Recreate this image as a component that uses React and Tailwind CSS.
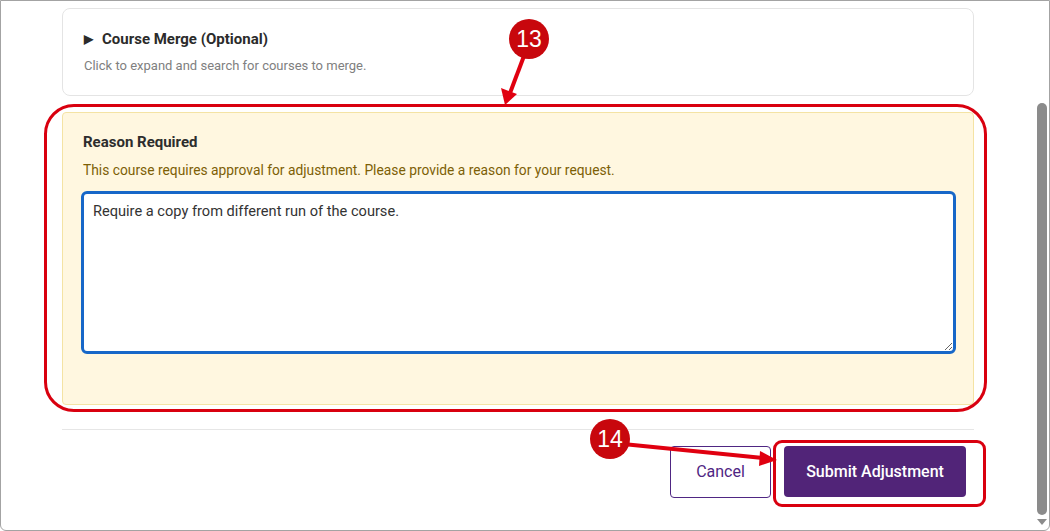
import React from 'react';

const Badge = ({ n, className }) => (
    <div
        className={`absolute w-[40px] h-[40px] rounded-full bg-[#c8070d] text-white flex items-center justify-center text-[23px] font-['Liberation_Sans',Arial,sans-serif] ${className}`}
    >
        {n}
    </div>
);

const App = () => {
    return (
        <div className="relative w-[1050px] h-[531px] overflow-hidden bg-white border border-[#a3a3a3] rounded-b-[6px] font-['Roboto',sans-serif] flex">
            <div className="flex-1 pl-[61px] pr-[61px] pt-[7px]">
                {/* collapsed merge section */}
                <div className="border border-[#e4e4e4] rounded-lg pl-[21px] pt-[20px] pb-[21px] h-[88px]">
                    <div className="flex items-center gap-[9px] text-[15px] leading-[20px] font-bold text-[#2b2b2b]">
                        <span className="text-[12px]">▶</span>
                        <span>Course Merge (Optional)</span>
                    </div>
                    <p className="mt-[8px] text-[13px] leading-[17px] text-[#808080]">
                        Click to expand and search for courses to merge.
                    </p>
                </div>

                {/* reason panel */}
                <div className="mt-[16px] h-[293px] bg-[#fff7e0] border border-[#f4e3a4] rounded-[4px] pl-[18px] pr-[17px] pt-[19px]">
                    <h3 className="pl-[2px] text-[15px] leading-[20px] font-bold text-[#2d2d2d]">Reason Required</h3>
                    <p className="pl-[2px] mt-[8px] text-[13.8px] leading-[20px] text-[#7d5f06]">
                        This course requires approval for adjustment. Please provide a reason for your request.
                    </p>
                    <textarea
                        defaultValue="Require a copy from different run of the course."
                        className="mt-[11px] block w-full h-[163px] bg-white border-[3px] border-[#1767c8] rounded-[6px] px-[9px] py-[7px] text-[14.6px] leading-[20px] text-[#333] outline-none font-['Roboto',sans-serif]"
                    />
                </div>

                <div className="mt-[24px] border-t border-[#e6e6e6]" />

                <div className="mt-[16px] flex justify-end gap-[13px] pr-[8px]">
                    <button className="w-[101px] h-[52px] border-[1.5px] border-[#4f2683] rounded-[4px] text-[#4f2683] text-[16px] bg-white">
                        Cancel
                    </button>
                    <button className="w-[182px] h-[51px] bg-[#512478] rounded-[4px] text-white text-[16px] font-medium">
                        Submit Adjustment
                    </button>
                </div>
            </div>

            {/* scrollbar */}
            <div className="w-[13px] mr-[1px] flex flex-col items-center">
                <div className="mt-[102px] w-[10px] h-[412px] rounded-full bg-[#8b8b8b]" />
                <div className="mt-[4px] w-0 h-0 border-l-[5px] border-r-[5px] border-t-[6px] border-l-transparent border-r-transparent border-t-[#8b8b8b]" />
            </div>

            {/* callouts */}
            <div className="absolute left-[43px] top-[103px] w-[943px] h-[308px] border-[3px] border-[#d9000f] rounded-[30px] pointer-events-none" />
            <div className="absolute left-[772px] top-[439px] w-[213px] h-[67px] border-[3px] border-[#d9000f] rounded-[9px] pointer-events-none" />
            <svg className="absolute left-0 top-0 pointer-events-none" width="1050" height="531">
                <line x1="523" y1="55" x2="509" y2="92" stroke="#e00010" strokeWidth="4" />
                <polygon points="504,104 500,87 516,93" fill="#e00010" />
                <line x1="622" y1="443" x2="762" y2="457" stroke="#e00010" strokeWidth="4" />
                <polygon points="776,459 759,450 758,465" fill="#e00010" />
            </svg>
            <Badge n="13" className="left-[508px] top-[18px]" />
            <Badge n="14" className="left-[589px] top-[418px]" />
        </div>
    );
};

export default App;
